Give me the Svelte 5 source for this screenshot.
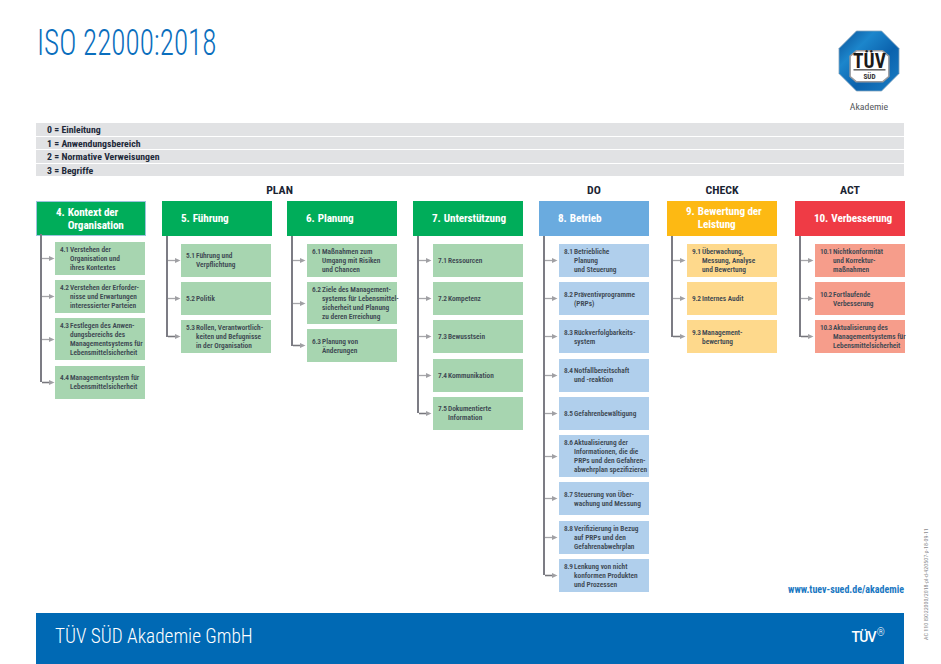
<script>
const legend = ["0 = Einleitung", "1 = Anwendungsbereich", "2 = Normative Verweisungen", "3 = Begriffe"];

const columns = [
	{ tone: "green", no: "4.", title: ["Kontext der", "Organisation"], outlined: true, items: [
		["4.1", ["Verstehen der", "Organisation und", "ihres Kontextes"]],
		["4.2", ["Verstehen der Erforder-", "nisse und Erwartungen", "interessierter Parteien"]],
		["4.3", ["Festlegen des Anwen-", "dungsbereichs des", "Managementsystems für", "Lebensmittelsicherheit"]],
		["4.4", ["Managementsystem für", "Lebensmittelsicherheit"]]
	] },
	{ tone: "green", no: "5.", title: ["Führung"], items: [
		["5.1", ["Führung und", "Verpflichtung"]],
		["5.2", ["Politik"]],
		["5.3", ["Rollen, Verantwortlich-", "keiten und Befugnisse", "in der Organisation"]]
	] },
	{ tone: "green", no: "6.", title: ["Planung"], items: [
		["6.1", ["Maßnahmen zum", "Umgang mit Risiken", "und Chancen"]],
		["6.2", ["Ziele des Management-", "systems für Lebensmittel-", "sicherheit und Planung", "zu deren Erreichung"]],
		["6.3", ["Planung von", "Änderungen"]]
	] },
	{ tone: "green", no: "7.", title: ["Unterstützung"], items: [
		["7.1", ["Ressourcen"]],
		["7.2", ["Kompetenz"]],
		["7.3", ["Bewusstsein"]],
		["7.4", ["Kommunikation"]],
		["7.5", ["Dokumentierte", "Information"]]
	] },
	{ tone: "blue", no: "8.", title: ["Betrieb"], items: [
		["8.1", ["Betriebliche", "Planung", "und Steuerung"]],
		["8.2", ["Präventivprogramme", "(PRPs)"]],
		["8.3", ["Rückverfolgbarkeits-", "system"]],
		["8.4", ["Notfallbereitschaft", "und -reaktion"]],
		["8.5", ["Gefahrenbewältigung"]],
		["8.6", ["Aktualisierung der", "Informationen, die die", "PRPs und den Gefahren-", "abwehrplan spezifizieren"]],
		["8.7", ["Steuerung von Über-", "wachung und Messung"]],
		["8.8", ["Verifizierung in Bezug", "auf PRPs und den", "Gefahrenabwehrplan"]],
		["8.9", ["Lenkung von nicht", "konformen Produkten", "und Prozessen"]]
	] },
	{ tone: "yellow", no: "9.", title: ["Bewertung der", "Leistung"], items: [
		["9.1", ["Überwachung,", "Messung, Analyse", "und Bewertung"]],
		["9.2", ["Internes Audit"]],
		["9.3", ["Management-", "bewertung"]]
	] },
	{ tone: "red", no: "10.", title: ["Verbesserung"], items: [
		["10.1", ["Nichtkonformität", "und Korrektur-", "maßnahmen"]],
		["10.2", ["Fortlaufende", "Verbesserung"]],
		["10.3", ["Aktualisierung des", "Managementsystems für", "Lebensmittelsicherheit"]]
	] }
];
</script>

<div class="page">
	<header class="top">
		<h1>ISO 22000:2018</h1>
		<div class="logo">
			<svg viewBox="0 0 64 64" width="62" height="62" aria-label="TÜV SÜD">
				<defs>
					<linearGradient id="octa" x1="0" y1="0" x2="1" y2="1">
						<stop offset="0" stop-color="#0a4f96" />
						<stop offset="0.3" stop-color="#1c86cc" />
						<stop offset="0.6" stop-color="#0b62ad" />
						<stop offset="1" stop-color="#1a7fc6" />
					</linearGradient>
				</defs>
				<polygon points="19,1 45,1 63,19 63,45 45,63 19,63 1,45 1,19" fill="url(#octa)" stroke="#8fa9bf" stroke-width="0.8" />
				<polygon points="19,21.5 46,21.5 52.5,27 52.5,48 46,53.5 19,53.5 12.5,48 12.5,27" fill="#fff" stroke="#9a9a9e" stroke-width="1.6" stroke-linejoin="round" />
				<text class="logo-tuv" x="32.5" y="39.2" text-anchor="middle">TÜV</text>
				<rect x="16" y="40.6" width="33" height="1.1" fill="#222" />
				<text class="logo-sud" x="32.5" y="50.5" text-anchor="middle">SÜD</text>
			</svg>
			<span>Akademie</span>
		</div>
	</header>

	<div class="legend">
		{#each legend as row}
			<div class="legend-row">{row}</div>
		{/each}
	</div>

	<div class="chart">
		<div class="phase plan">PLAN</div>
		<div class="phase">DO</div>
		<div class="phase">CHECK</div>
		<div class="phase">ACT</div>

		{#each columns as col}
			<section class="col {col.tone}">
				<div class="head" class:outlined={col.outlined}>
					<span class="head-no">{col.no}</span>
					<span class="head-title">
						{#each col.title as line}<span>{line}</span>{/each}
					</span>
				</div>
				<ul class:tight={col.outlined}>
					{#each col.items as [no, lines]}
						<li class:tall={lines.length > 3}>
							<svg class="arrow" viewBox="0 0 13 7" width="13" height="7" aria-hidden="true">
								<path d="M0 3.5H8" stroke="#a6a6aa" stroke-width="1.3" />
								<path class="stub" d="M0 3.5H7" stroke="#77777d" stroke-width="1.4" />
								<path d="M7 1 L12.5 3.5 L7 6 Z" fill="#a0a0a4" />
							</svg>
							<div class="entry">
								<span class="no" class:wide={no.length > 3}>{no}</span>
								<span class="text">
									{#each lines as line}<span>{line}</span>{/each}
								</span>
							</div>
						</li>
					{/each}
				</ul>
			</section>
		{/each}
	</div>

	<a class="url" href="#top">www.tuev-sued.de/akademie</a>

	<footer>
		<span class="company">TÜV SÜD Akademie GmbH</span>
		<span class="mark">TÜV<sup>®</sup></span>
	</footer>

	<div class="docref">AC 110 ISO22000/2018-pl-d-420507-p-18-09-11</div>
</div>

<style>
	:global(body) {
		margin: 0;
		background: #fff;
	}

	.page {
		position: relative;
		box-sizing: border-box;
		width: 941px;
		height: 664px;
		padding: 0 37px 0 36px;
		display: flex;
		flex-direction: column;
		overflow: hidden;
		font-family: Roboto, "Liberation Sans", sans-serif;
		font-stretch: 75%;
	}

	.top {
		height: 123px;
		display: flex;
		justify-content: space-between;
		align-items: flex-start;
	}

	h1 {
		margin: 23px 0 0 1px;
		font-size: 36px;
		line-height: 40px;
		font-weight: 300;
		color: #0a6ebd;
		transform: scaleX(0.81);
		transform-origin: left center;
	}

	.logo {
		margin: 30px 2px 0 0;
		width: 66px;
		display: flex;
		flex-direction: column;
		align-items: center;
		color: #55585c;
		font-size: 9.8px;
		line-height: 12px;
	}

	.logo svg {
		display: block;
		margin-bottom: 9px;
	}

	.logo-tuv {
		font-size: 20px;
		font-weight: 700;
		fill: #1a1a1a;
	}

	.logo-sud {
		font-size: 7.5px;
		font-weight: 700;
		fill: #333;
	}

	.legend {
		display: flex;
		flex-direction: column;
		gap: 1px;
	}

	.legend-row {
		height: 12.6px;
		padding-left: 11px;
		background: #e1e2e4;
		color: #1e2a3a;
		font-size: 9.8px;
		font-weight: 700;
		line-height: 13px;
	}

	.chart {
		display: grid;
		grid-template-columns: 126px 125px 126px 126px 128px 128px 109px;
		grid-template-rows: 24.6px auto;
	}

	.phase {
		grid-row: 1;
		padding-top: 7px;
		width: 110px;
		text-align: center;
		color: #1a2433;
		font-size: 11.8px;
		font-weight: 700;
		line-height: 14px;
	}

	.phase.plan {
		grid-column: 1 / 5;
		width: 487px;
	}

	.col {
		grid-row: 2;
		width: 110px;
	}

	.head {
		box-sizing: border-box;
		height: 35px;
		padding: 1px 0 0 19px;
		display: flex;
		align-items: center;
		gap: 3px;
		color: #fff;
		font-size: 11.2px;
		font-weight: 700;
		letter-spacing: -0.1px;
		line-height: 13.5px;
	}

	.head.outlined {
		border: 1px solid #9cc3dc;
	}

	.head-title,
	.text {
		display: flex;
		flex-direction: column;
	}

	.outlined .head-no,
	.outlined .head-title,
	.yellow .head-no,
	.yellow .head-title {
		align-self: flex-start;
		margin-top: 3px;
	}

	ul {
		list-style: none;
		margin: 0;
		padding: 8px 0 0 20px;
		display: flex;
		flex-direction: column;
		gap: 5.25px;
	}

	/* the first two columns sit one pixel further left inside their header */
	.col:nth-of-type(-n + 2) ul {
		padding-left: 19px;
		padding-right: 1px;
	}

	.col ul.tight {
		padding-top: 6px;
	}

	li {
		position: relative;
		box-sizing: border-box;
		height: 33px;
		padding-left: 5px;
		display: flex;
		align-items: center;
		color: #3d4852;
		font-size: 7.35px;
		font-weight: 600;
		line-height: 9px;
		white-space: nowrap;
	}

	li.tall {
		height: 42px;
	}

	.entry {
		display: flex;
	}

	/* spine of the tree, one segment per row */
	li::before {
		content: "";
		position: absolute;
		left: -16px;
		top: -5.25px;
		bottom: 0;
		width: 2.2px;
		background: #7c7c84;
	}

	li:first-child::before {
		top: -8px;
	}

	li:last-child::before {
		bottom: 50%;
	}

	.arrow {
		position: absolute;
		left: -14px;
		top: 50%;
		margin-top: -3.5px;
	}

	.col:nth-of-type(-n + 2) li::before {
		left: -15px;
	}

	.col:nth-of-type(-n + 2) .arrow {
		left: -13px;
	}

	.stub {
		display: none;
	}

	li:last-child .stub {
		display: block;
	}

	.no {
		flex: none;
		width: 10px;
		letter-spacing: -0.3px;
	}

	.no.wide {
		width: 13px;
	}

	.green .head { background: #00ad5a; }
	.green li { background: #a7d5b0; }
	.blue .head { background: #6aabdf; }
	.blue li { background: #b0cfec; }
	.yellow .head { background: #fdb913; }
	.yellow li { background: #fed98c; }
	.red .head { background: #ef3b45; }
	.red li { background: #f69d8b; }

	.url {
		position: absolute;
		right: 37px;
		top: 584px;
		color: #1a78c2;
		font-size: 10px;
		font-weight: 700;
		line-height: 12px;
		text-decoration: none;
	}

	footer {
		margin-top: auto;
		box-sizing: border-box;
		height: 51px;
		padding: 0 20px 4px 19px;
		display: flex;
		align-items: center;
		justify-content: space-between;
		background: #0069b4;
		color: #fff;
	}

	.company {
		font-size: 19.3px;
		font-weight: 300;
		line-height: 24px;
	}

	.mark {
		font-size: 14px;
		font-weight: 500;
		font-stretch: 100%;
		letter-spacing: -0.8px;
		line-height: 16px;
	}

	.mark sup {
		font-size: 10px;
		font-weight: 300;
		line-height: 0;
		margin-left: 1px;
	}

	.docref {
		position: absolute;
		left: 922px;
		top: 528px;
		height: 112px;
		writing-mode: vertical-rl;
		transform: rotate(180deg);
		color: #8b8d90;
		font-size: 6px;
		line-height: 8px;
		white-space: nowrap;
	}
</style>
